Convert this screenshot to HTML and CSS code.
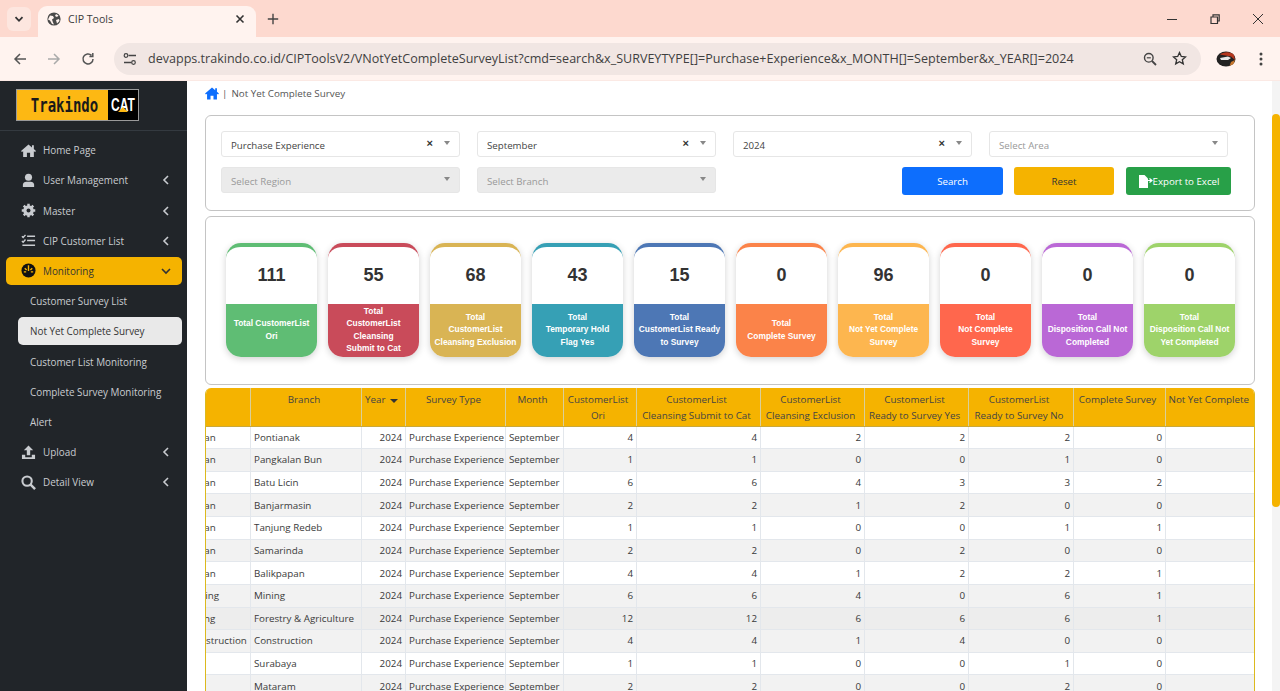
FILE: index.html
```html
<!DOCTYPE html>
<html lang="en">
<head>
    <meta charset="UTF-8">
    <meta name="viewport" content="width=device-width, initial-scale=1.0">
    <title>CIP Tools</title>
    <link rel="stylesheet" href="styles.css">
</head>
<body>
    <!-- browser window -->
    <div class="tabstrip">
        <div class="tab-menu"><svg width="10" height="10" viewBox="0 0 10 10"><path d="M1.5 3.2 5 6.8l3.5-3.6" fill="none" stroke="#333" stroke-width="1.8"/></svg></div>
        <div class="tab">
            <svg class="globe" width="14" height="14" viewBox="0 0 14 14"><circle cx="7" cy="7" r="6.6" fill="#4a4a4a"/><path d="M3 3.5l3 .5 1 2-2 1.5 1 3 1 2-2-.5-2-3.5-2-1zM9 2l2.5 1.5L10 5 8 4zM9 8l3-1 .5 2-2.5 2.5z" fill="#fff3ef"/></svg>
            <span class="tab-title">CIP Tools</span>
            <svg class="tab-close" width="10" height="10" viewBox="0 0 10 10"><path d="M1.5 1.5l7 7m0-7l-7 7" stroke="#333" stroke-width="1.6"/></svg>
        </div>
        <svg class="tab-new" width="12" height="12" viewBox="0 0 12 12"><path d="M6 .8v10.4M.8 6h10.4" stroke="#444" stroke-width="1.4"/></svg>
        <div class="win-buttons">
            <svg width="12" height="12" viewBox="0 0 12 12"><path d="M1 6.5h10" stroke="#333" stroke-width="1"/></svg>
            <svg width="12" height="12" viewBox="0 0 12 12"><path d="M2 4h6.5v6.500H2zM4 4V1.800h6.200V8H8.500" fill="none" stroke="#333" stroke-width="1.2"/></svg>
            <svg width="12" height="12" viewBox="0 0 12 12"><path d="M1 1l10 10m0-10L1 11" stroke="#333" stroke-width="1"/></svg>
        </div>
    </div>
    <div class="toolbar">
        <svg class="nav-icon" width="14" height="14" viewBox="0 0 14 14"><path d="M13 7H2m5-5L2 7l5 5" fill="none" stroke="#555" stroke-width="1.5"/></svg>
        <svg class="nav-icon" width="14" height="14" viewBox="0 0 14 14"><path d="M1 7h11M7 2l5 5-5 5" fill="none" stroke="#aaa" stroke-width="1.5"/></svg>
        <svg class="nav-icon" width="14" height="14" viewBox="0 0 14 14"><path d="M12 7a5 5 0 1 1-1.5-3.600M11.800 1v3.400H8.400" fill="none" stroke="#555" stroke-width="1.5"/></svg>
        <div class="urlbar">
            <svg class="url-tune" width="14" height="14" viewBox="0 0 14 14"><path d="M5.500 3.500H13M1 10.500h7.500" stroke="#444" stroke-width="1.3"/><circle cx="3" cy="3.500" r="1.800" fill="none" stroke="#444" stroke-width="1.2"/><circle cx="10.500" cy="10.500" r="1.800" fill="none" stroke="#444" stroke-width="1.2"/></svg>
            <span class="url-text">devapps.trakindo.co.id/CIPToolsV2/VNotYetCompleteSurveyList?cmd=search&amp;x_SURVEYTYPE[]=Purchase+Experience&amp;x_MONTH[]=September&amp;x_YEAR[]=2024</span>
            <svg class="url-zoom" width="14" height="14" viewBox="0 0 14 14"><circle cx="5.800" cy="5.800" r="4.300" fill="none" stroke="#444" stroke-width="1.4"/><path d="M9 9l4 4" stroke="#444" stroke-width="1.8"/><path d="M3.800 5.800h4" stroke="#444" stroke-width="1.2"/></svg>
            <svg class="url-star" width="15" height="15" viewBox="0 0 15 15"><path d="M7.500 1.500l1.800 4 4.200.4-3.200 2.800 1 4.200-3.800-2.200-3.800 2.200 1-4.200L1.500 5.900l4.200-.4z" fill="none" stroke="#333" stroke-width="1.3"/></svg>
        </div>
        <svg class="ext-icon" width="20" height="16" viewBox="0 0 20 16"><ellipse cx="10" cy="8" rx="9.500" ry="7.500" fill="#222"/><path d="M4 3.500C7 .5 15 0 18 4l1 5-4-3.500z" fill="#b5371f"/><path d="M4 7l8-1.500 3 1.500-3 2H5z" fill="#e8e8e8"/><path d="M15 11l4-2-1.500 4-4 2z" fill="#c9772c"/></svg>
        <svg class="kebab" width="4" height="14" viewBox="0 0 4 14"><circle cx="2" cy="2" r="1.5" fill="#444"/><circle cx="2" cy="7" r="1.5" fill="#444"/><circle cx="2" cy="12" r="1.5" fill="#444"/></svg>
    </div>

    <div class="page">
        <aside class="sidebar">
            <div class="brand">
                <div class="logo">
                    <span class="logo-name"><span>Trakindo</span></span>
                    <span class="logo-cat"><span>CAT</span><i></i></span>
                </div>
            </div>
            <nav class="menu">
                <a class="menu-item">
                    <svg class="menu-icon" viewBox="0 0 16 16"><path d="M8 1.500L0 8.500l1 1.200 1.300-1V15h4v-4.500h3.400V15h4V8.700l1.300 1 1-1.200-2.300-2V2.500h-2v2.200z" fill="#c9ccd0"/></svg>
                    <span class="menu-label">Home Page</span>
                </a>
                <a class="menu-item">
                    <svg class="menu-icon" viewBox="0 0 16 16"><circle cx="8" cy="4.500" r="3.800" fill="#c9ccd0"/><path d="M2 15v-2.500C2 10.200 3.800 9.200 5.500 9.200h5c1.700 0 3.500 1 3.500 3.300V15z" fill="#c9ccd0"/></svg>
                    <span class="menu-label">User Management</span>
                    <svg class="chevron" width="8" height="10" viewBox="0 0 8 10"><path d="M6 1L2 5l4 4" fill="none" stroke="#c9ccd0" stroke-width="1.6"/></svg>
                </a>
                <a class="menu-item">
                    <svg class="menu-icon" viewBox="0 0 16 16"><circle cx="8" cy="8" r="4" fill="none" stroke="#c9ccd0" stroke-width="3.2"/><path d="M8 .8v14.400M.8 8h14.400M2.900 2.900l10.200 10.200M13.100 2.900L2.900 13.100" stroke="#c9ccd0" stroke-width="2.6"/><circle cx="8" cy="8" r="2.100" fill="#212529"/></svg>
                    <span class="menu-label">Master</span>
                    <svg class="chevron" width="8" height="10" viewBox="0 0 8 10"><path d="M6 1L2 5l4 4" fill="none" stroke="#c9ccd0" stroke-width="1.6"/></svg>
                </a>
                <a class="menu-item">
                    <svg class="menu-icon" viewBox="0 0 16 16"><path d="M1 3.500l1.300 1.300L4.800 2M1 8.500l1.300 1.300L4.800 7M6.500 3.500H15M6.500 8H15M1.500 13H15" fill="none" stroke="#c9ccd0" stroke-width="1.5"/></svg>
                    <span class="menu-label">CIP Customer List</span>
                    <svg class="chevron" width="8" height="10" viewBox="0 0 8 10"><path d="M6 1L2 5l4 4" fill="none" stroke="#c9ccd0" stroke-width="1.6"/></svg>
                </a>
                <a class="menu-item is-open">
                    <svg class="menu-icon" viewBox="0 0 16 16"><circle cx="8" cy="8" r="7.500" fill="#111"/><path d="M8 2.500v6M4 5.500l2 2M12 5.500l-2 2M3 9.500h2.500M13 9.500h-2.500" stroke="#f5b300" stroke-width="1.5"/></svg>
                    <span class="menu-label">Monitoring</span>
                    <svg class="chevron" width="10" height="8" viewBox="0 0 10 8"><path d="M1 2l4 4 4-4" fill="none" stroke="#333" stroke-width="1.6"/></svg>
                </a>
                <a class="menu-sub">Customer Survey List</a>
                <a class="menu-sub is-current">Not Yet Complete Survey</a>
                <a class="menu-sub">Customer List Monitoring</a>
                <a class="menu-sub">Complete Survey Monitoring</a>
                <a class="menu-sub">Alert</a>
                <a class="menu-item">
                    <svg class="menu-icon" viewBox="0 0 16 16"><path d="M8 .5L3 5.500h3.200V11h3.600V5.500H13z" fill="#c9ccd0"/><path d="M1 10.500h3.500V13h7v-2.500H15V15H1z" fill="#c9ccd0"/></svg>
                    <span class="menu-label">Upload</span>
                    <svg class="chevron" width="8" height="10" viewBox="0 0 8 10"><path d="M6 1L2 5l4 4" fill="none" stroke="#c9ccd0" stroke-width="1.6"/></svg>
                </a>
                <a class="menu-item">
                    <svg class="menu-icon" viewBox="0 0 16 16"><circle cx="6.500" cy="6.500" r="5" fill="none" stroke="#c9ccd0" stroke-width="2.2"/><path d="M10 10l5 5" stroke="#c9ccd0" stroke-width="2.6"/></svg>
                    <span class="menu-label">Detail View</span>
                    <svg class="chevron" width="8" height="10" viewBox="0 0 8 10"><path d="M6 1L2 5l4 4" fill="none" stroke="#c9ccd0" stroke-width="1.6"/></svg>
                </a>
            </nav>
        </aside>

        <main class="content">
            <div class="breadcrumb">
                <svg width="14" height="13" viewBox="0 0 16 15"><path d="M8 .5L0 7.500l1 1.200 1.300-1V14.500h4v-4.500h3.400v4.500h4V7.700l1.300 1 1-1.200-2.300-2V1.500h-2v2.200z" fill="#0d6efd"/></svg>
                <span class="crumb-sep">|</span>
                <span>Not Yet Complete Survey</span>
            </div>

            <form class="filter-box">
                <div class="select"><span>Purchase Experience</span><b class="clear">×</b><i class="caret"></i></div>
                <div class="select"><span>September</span><b class="clear">×</b><i class="caret"></i></div>
                <div class="select"><span>2024</span><b class="clear">×</b><i class="caret"></i></div>
                <div class="select is-empty"><span>Select Area</span><i class="caret"></i></div>
                <div class="select is-disabled"><span>Select Region</span><i class="caret"></i></div>
                <div class="select is-disabled"><span>Select Branch</span><i class="caret"></i></div>
                <div class="filter-buttons">
                    <button type="button" class="btn btn-search">Search</button>
                    <button type="button" class="btn btn-reset">Reset</button>
                    <button type="button" class="btn btn-export"><svg width="15" height="13" viewBox="0 0 15 13"><path d="M1 0h5.500L10 3.500V13H1z" fill="#fff"/><path d="M7 5.500h7M11.500 3.500l2.500 2-2.500 2" fill="none" stroke="#fff" stroke-width="1.2"/></svg>Export to Excel</button>
                </div>
            </form>

            <section class="cards-box">
                <div class="card c-green"><div class="card-num">111</div><div class="card-label"><p>Total CustomerList<br>Ori</p></div></div>
                <div class="card c-red"><div class="card-num">55</div><div class="card-label"><p>Total<br>CustomerList<br>Cleansing<br>Submit to Cat</p></div></div>
                <div class="card c-gold"><div class="card-num">68</div><div class="card-label"><p>Total<br>CustomerList<br>Cleansing Exclusion</p></div></div>
                <div class="card c-teal"><div class="card-num">43</div><div class="card-label"><p>Total<br>Temporary Hold<br>Flag Yes</p></div></div>
                <div class="card c-blue"><div class="card-num">15</div><div class="card-label"><p>Total<br>CustomerList Ready<br>to Survey</p></div></div>
                <div class="card c-orange"><div class="card-num">0</div><div class="card-label"><p>Total<br>Complete Survey</p></div></div>
                <div class="card c-amber"><div class="card-num">96</div><div class="card-label"><p>Total<br>Not Yet Complete<br>Survey</p></div></div>
                <div class="card c-tomato"><div class="card-num">0</div><div class="card-label"><p>Total<br>Not Complete<br>Survey</p></div></div>
                <div class="card c-purple"><div class="card-num">0</div><div class="card-label"><p>Total<br>Disposition Call Not<br>Completed</p></div></div>
                <div class="card c-lime"><div class="card-num">0</div><div class="card-label"><p>Total<br>Disposition Call Not<br>Yet Completed</p></div></div>
            </section>

            <div class="table-wrap">
                <table class="survey-table">
                    <colgroup>
                        <col class="w72"><col class="w111"><col class="w44"><col class="w100"><col class="w58"><col class="w73"><col class="w124"><col class="w104"><col class="w104"><col class="w105"><col class="w92"><col class="w90">
                    </colgroup>
                    <thead>
                        <tr>
                            <th></th><th>Branch</th><th class="th-left">Year <i class="sort"></i></th><th>Survey Type</th><th>Month</th><th>CustomerList<br>Ori</th><th>CustomerList<br>Cleansing Submit to Cat</th><th>CustomerList<br>Cleansing Exclusion</th><th>CustomerList<br>Ready to Survey Yes</th><th>CustomerList<br>Ready to Survey No</th><th>Complete Survey</th><th>Not Yet Complete</th>
                        </tr>
                    </thead>
                    <tbody>
                        <tr><td>Selatan</td><td>Pontianak</td><td class="num">2024</td><td>Purchase Experience</td><td>September</td><td class="num">4</td><td class="num">4</td><td class="num">2</td><td class="num">2</td><td class="num">2</td><td class="num">0</td><td></td></tr>
                        <tr><td>Selatan</td><td>Pangkalan Bun</td><td class="num">2024</td><td>Purchase Experience</td><td>September</td><td class="num">1</td><td class="num">1</td><td class="num">0</td><td class="num">0</td><td class="num">1</td><td class="num">0</td><td></td></tr>
                        <tr><td>Selatan</td><td>Batu Licin</td><td class="num">2024</td><td>Purchase Experience</td><td>September</td><td class="num">6</td><td class="num">6</td><td class="num">4</td><td class="num">3</td><td class="num">3</td><td class="num">2</td><td></td></tr>
                        <tr><td>Selatan</td><td>Banjarmasin</td><td class="num">2024</td><td>Purchase Experience</td><td>September</td><td class="num">2</td><td class="num">2</td><td class="num">1</td><td class="num">2</td><td class="num">0</td><td class="num">0</td><td></td></tr>
                        <tr><td>Selatan</td><td>Tanjung Redeb</td><td class="num">2024</td><td>Purchase Experience</td><td>September</td><td class="num">1</td><td class="num">1</td><td class="num">0</td><td class="num">0</td><td class="num">1</td><td class="num">1</td><td></td></tr>
                        <tr><td>Selatan</td><td>Samarinda</td><td class="num">2024</td><td>Purchase Experience</td><td>September</td><td class="num">2</td><td class="num">2</td><td class="num">0</td><td class="num">2</td><td class="num">0</td><td class="num">0</td><td></td></tr>
                        <tr><td>Selatan</td><td>Balikpapan</td><td class="num">2024</td><td>Purchase Experience</td><td>September</td><td class="num">4</td><td class="num">4</td><td class="num">1</td><td class="num">2</td><td class="num">2</td><td class="num">1</td><td></td></tr>
                        <tr><td class="inset">Mining</td><td>Mining</td><td class="num">2024</td><td>Purchase Experience</td><td>September</td><td class="num">6</td><td class="num">6</td><td class="num">4</td><td class="num">0</td><td class="num">6</td><td class="num">1</td><td></td></tr>
                        <tr class="row-dark"><td>Ladang</td><td>Forestry &amp; Agriculture</td><td class="num">2024</td><td>Purchase Experience</td><td>September</td><td class="num">12</td><td class="num">12</td><td class="num">6</td><td class="num">6</td><td class="num">6</td><td class="num">1</td><td></td></tr>
                        <tr><td class="inset">Construction</td><td>Construction</td><td class="num">2024</td><td>Purchase Experience</td><td>September</td><td class="num">4</td><td class="num">4</td><td class="num">1</td><td class="num">4</td><td class="num">0</td><td class="num">0</td><td></td></tr>
                        <tr><td></td><td>Surabaya</td><td class="num">2024</td><td>Purchase Experience</td><td>September</td><td class="num">1</td><td class="num">1</td><td class="num">0</td><td class="num">0</td><td class="num">1</td><td class="num">0</td><td></td></tr>
                        <tr><td></td><td>Mataram</td><td class="num">2024</td><td>Purchase Experience</td><td>September</td><td class="num">2</td><td class="num">2</td><td class="num">0</td><td class="num">0</td><td class="num">2</td><td class="num">0</td><td></td></tr>
                    </tbody>
                </table>
            </div>
        </main>

        <div class="scrollbar"><div class="scroll-thumb"></div></div>
    </div>
</body>
</html>
```

FILE: styles.css
```css
* {
    box-sizing: border-box;
}
html, body {
    height: 100%;
    margin: 0;
}
body {
    display: flex;
    flex-direction: column;
    overflow: hidden;
    font-family: "Open Sans", "Noto Sans", sans-serif;
    background-color: #fff;
    color: #333;
}

/* browser window */
.tabstrip {
    height: 37px;
    flex: none;
    display: flex;
    align-items: flex-end;
    background-color: #fdd9cf;
    padding-left: 7px;
}
.tab-menu {
    width: 24px;
    height: 24px;
    margin-bottom: 6px;
    border-radius: 6px;
    background-color: #fde6df;
    display: flex;
    align-items: center;
    justify-content: center;
}
.tab {
    width: 218px;
    height: 31px;
    margin-left: 7px;
    border-radius: 9px 9px 0 0;
    background-color: #fff3ef;
    display: flex;
    align-items: center;
    padding: 0 11px 5px 9px;
}
.tab-title {
    margin-left: 7px;
    font-size: 10.6px;
    color: #3c3c3c;
    flex: 1;
}
.tab-new {
    margin: 0 0 12px 11px;
}
.win-buttons {
    margin-left: auto;
    display: flex;
    gap: 31px;
    padding: 0 16px 12px 0;
}
.toolbar {
    height: 44px;
    flex: none;
    display: flex;
    align-items: center;
    background-color: #fff3ef;
    border-bottom: 1px solid #fbe9e4;
    padding-left: 13px;
}
.nav-icon {
    margin-right: 20px;
}
.urlbar {
    width: 1087px;
    height: 32px;
    margin-left: -1px;
    border-radius: 16px;
    background-color: #f1e6e3;
    display: flex;
    align-items: center;
    padding-left: 9px;
}
.url-text {
    margin-left: 11px;
    font-size: 12.55px;
    color: #3f3f3f;
    white-space: nowrap;
}
.url-tune {
    flex: none;
}
.url-zoom {
    margin-left: 69px;
}
.url-star {
    margin-left: 15px;
}
.ext-icon {
    margin-left: 15px;
}
.kebab {
    margin-left: 23px;
}

/* page */
.page {
    flex: 1;
    min-height: 0;
    display: flex;
    overflow: hidden;
}
.sidebar {
    width: 187px;
    flex: none;
    background-color: #212529;
    font-size: 9.9px;
}
.brand {
    height: 50px;
    padding: 8px 0 0 16px;
    border-bottom: 1px solid #343a40;
}
.logo {
    width: 123px;
    height: 32px;
    display: flex;
    border: 1px solid #9a9a9a;
    background-color: #fdb813;
}
.logo-name {
    flex: 1;
    display: flex;
    align-items: center;
    justify-content: center;
    font-family: "DejaVu Sans Mono", monospace;
    font-weight: bold;
    font-size: 14px;
    color: #1a1a1a;
}
.logo-name span {
    transform: scaleY(1.4);
    padding-left: 4px;
}
.logo-cat {
    position: relative;
    width: 30px;
    background-color: #000;
    display: flex;
    align-items: center;
    justify-content: center;
    font-family: "Liberation Sans", sans-serif;
    font-weight: bold;
    font-size: 12px;
    color: #fff;
}
.logo-cat span {
    transform: scaleY(1.5);
}
.logo-cat i {
    position: absolute;
    left: 10px;
    bottom: 8px;
    border-left: 5px solid transparent;
    border-right: 5px solid transparent;
    border-bottom: 5px solid #fdb813;
}
.menu {
    padding-top: 4.1px;
}
.menu-item, .menu-sub {
    height: 30.2px;
    display: flex;
    align-items: center;
    color: #c9ccd0;
}
.menu-item {
    padding-left: 21px;
}
.menu-icon {
    width: 15px;
    height: 15px;
    flex: none;
}
.menu-label {
    margin-left: 7px;
    flex: 1;
}
.chevron {
    margin-right: 17px;
}
.is-open {
    height: 28.2px;
    margin: 1px 5px 1px 6px;
    padding-left: 15px;
    border-radius: 5px;
    background-color: #f5b300;
    color: #333;
}
.is-open .chevron {
    margin-right: 11px;
}
.menu-sub {
    padding-left: 30px;
}
.is-current {
    height: 28.2px;
    margin: 1px 5px 1px 18px;
    padding-left: 12px;
    border-radius: 5px;
    background-color: #e9e9e9;
    color: #333;
}

.content {
    flex: 1;
    min-width: 0;
    padding: 0 17px 0 18px;
    overflow: hidden;
}
.breadcrumb {
    display: flex;
    align-items: center;
    height: 24px;
    margin-bottom: 10px;
    font-size: 9.8px;
    color: #555;
}
.crumb-sep {
    margin: 0 4px 0 3px;
}

.filter-box {
    height: 96px;
    display: grid;
    grid-template-columns: repeat(4, 239px);
    grid-template-rows: 26px 28px;
    column-gap: 17px;
    row-gap: 10px;
    padding: 15px 0 0 15px;
    border: 1px solid #c4c4c4;
    border-radius: 6px;
}
.select {
    height: 26px;
    display: flex;
    align-items: center;
    padding: 3px 9px 0 9px;
    border: 1px solid #e6e6e6;
    border-radius: 3px;
    font-size: 9.7px;
    color: #444;
}
.select span {
    flex: 1;
}
.clear {
    margin: -5px 11px 0 0;
    font-size: 11px;
    line-height: 1;
    font-family: "Liberation Sans", sans-serif;
    color: #333;
}
.caret {
    margin-top: -5px;
    border-left: 3px solid transparent;
    border-right: 3px solid transparent;
    border-top: 4px solid #888;
}
.is-empty {
    color: #999;
}
.is-disabled {
    background-color: #ebebeb;
    color: #999;
}
.filter-buttons {
    grid-column: 3 / 5;
    display: flex;
    justify-content: flex-end;
    gap: 11px;
    margin-right: -3px;
}
.btn {
    width: 101px;
    height: 28px;
    padding: 0;
    border: none;
    border-radius: 3px;
    font-family: inherit;
    font-size: 9.7px;
    display: flex;
    align-items: center;
    justify-content: center;
}
.btn-search {
    background-color: #0d6efd;
    color: #fff;
}
.btn-reset {
    width: 100px;
    background-color: #f5b300;
    color: #333;
}
.btn-export {
    width: 105px;
    margin-left: 1px;
    background-color: #28a048;
    color: #fff;
}

.cards-box {
    height: 169px;
    margin-top: 5px;
    display: grid;
    grid-template-columns: repeat(10, 91px);
    column-gap: 11px;
    padding: 26px 0 0 20px;
    border: 1px solid #c4c4c4;
    border-radius: 6px;
}
.card {
    height: 114px;
    border-radius: 15px;
    border-top: 4px solid;
    overflow: hidden;
    background-color: #fff;
    box-shadow: 0 2px 7px rgba(0, 0, 0, 0.18);
    font-family: "Liberation Sans", Arial, sans-serif;
    display: flex;
    flex-direction: column;
}
.card-num {
    height: 57px;
    display: flex;
    align-items: center;
    justify-content: center;
    font-size: 18px;
    font-weight: bold;
    color: #333;
}
.card-label {
    flex: 1;
    display: flex;
    align-items: center;
    justify-content: center;
    padding-bottom: 2px;
    text-align: center;
    font-size: 8.4px;
    font-weight: bold;
    line-height: 12.4px;
    color: #fff;
}
.card-label p {
    margin: 0;
    white-space: nowrap;
}
.c-green { border-color: #5fbd74; }
.c-green .card-label { background-color: #5fbd74; }
.c-red { border-color: #c94b5a; }
.c-red .card-label { background-color: #c94b5a; }
.c-gold { border-color: #d9b454; }
.c-gold .card-label { background-color: #d9b454; }
.c-teal { border-color: #36a0b5; }
.c-teal .card-label { background-color: #36a0b5; }
.c-blue { border-color: #4d77b5; }
.c-blue .card-label { background-color: #4d77b5; }
.c-orange { border-color: #fb8349; }
.c-orange .card-label { background-color: #fb8349; }
.c-amber { border-color: #fdb64f; }
.c-amber .card-label { background-color: #fdb64f; }
.c-tomato { border-color: #ff674d; }
.c-tomato .card-label { background-color: #ff674d; }
.c-purple { border-color: #ba68d6; }
.c-purple .card-label { background-color: #ba68d6; }
.c-lime { border-color: #9ed36a; }
.c-lime .card-label { background-color: #9ed36a; }

.table-wrap {
    margin-top: 3px;
    overflow: hidden;
    border-left: 1px solid #dcb91e;
    border-right: 1px solid #dcb91e;
    border-radius: 6px 6px 0 0;
}
.survey-table {
    table-layout: fixed;
    width: 1077px;
    margin-left: -28px;
    border-collapse: collapse;
    font-size: 9.8px;
    color: #3a3a3a;
}
.w72 { width: 72px; }
.w111 { width: 111px; }
.w44 { width: 44px; }
.w100 { width: 100px; }
.w58 { width: 58px; }
.w73 { width: 73px; }
.w124 { width: 124px; }
.w104 { width: 104px; }
.w105 { width: 105px; }
.w92 { width: 92px; }
.w90 { width: 90px; }
.survey-table th {
    height: 38px;
    padding: 4px 6px 0 2px;
    vertical-align: top;
    background-color: #f5b300;
    border-left: 1px solid #d9cf9a;
    border-bottom: 1px solid #c9a83a;
    font-weight: normal;
    line-height: 16px;
    color: #444;
    white-space: nowrap;
}
.survey-table th.th-left {
    padding-left: 3px;
    text-align: left;
}
.sort {
    display: inline-block;
    margin-left: 2px;
    vertical-align: 0;
    border-left: 4px solid transparent;
    border-right: 4px solid transparent;
    border-top: 4px solid #333;
}
.survey-table td {
    height: 22.64px;
    padding: 0 3px;
    border: 1px solid #e3e7ec;
    white-space: nowrap;
    overflow: hidden;
}
.survey-table td.num {
    text-align: right;
}
.survey-table td.inset {
    padding-left: 9px;
}
.survey-table tbody tr:nth-child(even) {
    background-color: #f2f2f2;
}
.survey-table tbody tr.row-dark {
    background-color: #ededed;
}
.scrollbar {
    width: 8px;
    flex: none;
    padding-top: 33px;
    background-color: #f4f4f4;
}
.scroll-thumb {
    height: 393px;
    border-radius: 4px;
    background-color: #f5b300;
}
```
